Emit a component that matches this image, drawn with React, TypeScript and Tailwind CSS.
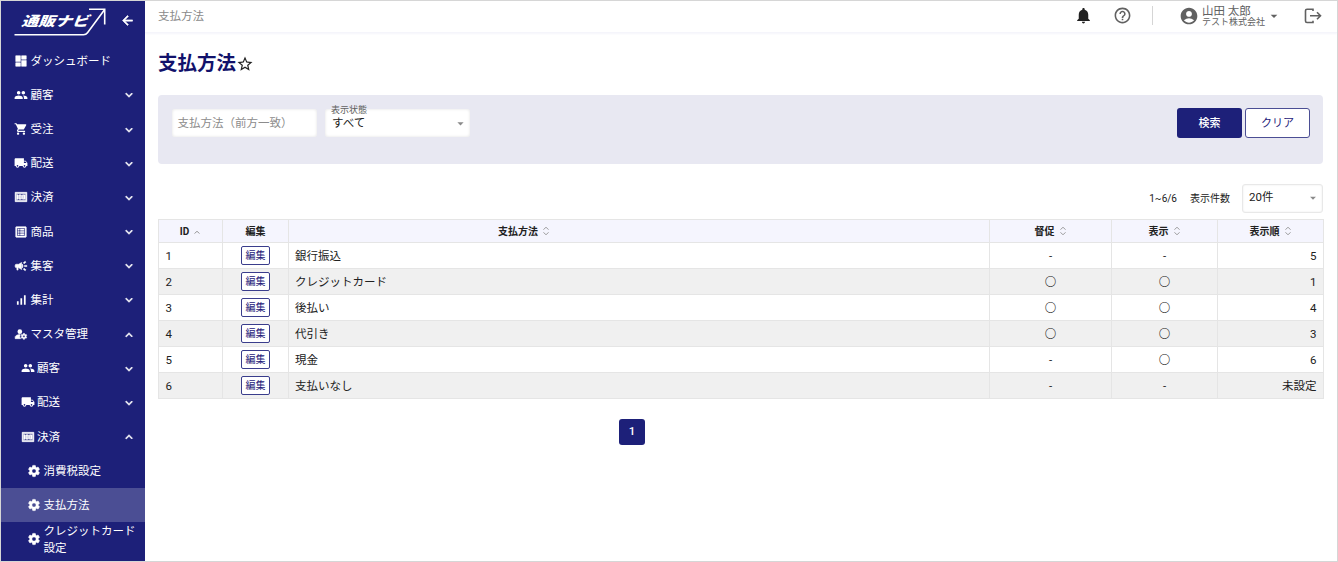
import type { ReactNode } from "react"
import type { IconType } from "react-icons"
import clsx from "clsx"
import {
  MdAccountCircle,
  MdArrowBack,
  MdArrowDropDown,
  MdCampaign,
  MdDashboard,
  MdExpandLess,
  MdExpandMore,
  MdHelpOutline,
  MdListAlt,
  MdLocalShipping,
  MdManageAccounts,
  MdMoney,
  MdNotifications,
  MdPeople,
  MdSettings,
  MdShoppingCart,
  MdSignalCellularAlt,
  MdStarBorder,
} from "react-icons/md"

type NavItem = {
  label: string
  icon: IconType
  level?: 0 | 1 | 2
  state?: "open" | "closed"
  active?: boolean
  bold?: boolean
}

const navItems: NavItem[] = [
  { label: "ダッシュボード", icon: MdDashboard, bold: true },
  { label: "顧客", icon: MdPeople, state: "closed" },
  { label: "受注", icon: MdShoppingCart, state: "closed" },
  { label: "配送", icon: MdLocalShipping, state: "closed" },
  { label: "決済", icon: MdMoney, state: "closed", bold: true },
  { label: "商品", icon: MdListAlt, state: "closed", bold: true },
  { label: "集客", icon: MdCampaign, state: "closed", bold: true },
  { label: "集計", icon: MdSignalCellularAlt, state: "closed" },
  { label: "マスタ管理", icon: MdManageAccounts, state: "open", bold: true },
  { label: "顧客", icon: MdPeople, level: 1, state: "closed" },
  { label: "配送", icon: MdLocalShipping, level: 1, state: "closed" },
  { label: "決済", icon: MdMoney, level: 1, state: "open", bold: true },
  { label: "消費税設定", icon: MdSettings, level: 2, bold: true },
  { label: "支払方法", icon: MdSettings, level: 2, active: true, bold: true },
  { label: "クレジットカード\n設定", icon: MdSettings, level: 2, bold: true },
]

const rows = [
  { id: 1, name: "銀行振込", remind: false, visible: false, order: "5" },
  { id: 2, name: "クレジットカード", remind: true, visible: true, order: "1" },
  { id: 3, name: "後払い", remind: true, visible: true, order: "4" },
  { id: 4, name: "代引き", remind: true, visible: true, order: "3" },
  { id: 5, name: "現金", remind: false, visible: true, order: "6" },
  { id: 6, name: "支払いなし", remind: false, visible: false, order: "未設定" },
]

// the Md icons carry an invisible bounding path, so only the visible one is thickened
const thick = "[&>path:not([fill=none])]:stroke-1"

function Logo() {
  return (
    <div className="relative h-[30px] w-[94px]">
      <svg className="absolute inset-0" width="94" height="30" fill="none" stroke="#fff" strokeWidth="1.6">
        <path d="M0.500 27.700H69.500Q72 27.700 73.500 25.700L90.500 2.700" />
        <path d="M75 2.200H90.700V17.500" />
      </svg>
      <span className="absolute left-[9px] top-[6px] origin-left -skew-x-[18deg] scale-x-[1.25] whitespace-nowrap text-[13.5px] font-black leading-[16px]">
        通販ナビ
      </span>
    </div>
  )
}

function NavRow({ item }: { item: NavItem }) {
  const Icon = item.icon
  return (
    <li
      className={clsx(
        "flex h-[34.18px] items-center pr-[9px]",
        item.level === 2 ? "pl-[26px]" : item.level === 1 ? "pl-[19.5px]" : "pl-[13px]",
        item.active && "bg-[#4b4e94]"
      )}
    >
      <Icon className={clsx("mr-[2.5px] size-[14px] shrink-0", item.bold && thick)} />
      <span className={clsx("whitespace-pre pt-px text-[11.5px] leading-[17px]", item.level !== 2 && "flex-1")}>
        {item.label}
      </span>
      {item.state === "closed" && <MdExpandMore className={clsx("mt-px size-[14px]", thick)} />}
      {item.state === "open" && <MdExpandLess className={clsx("mt-px size-[14px]", thick)} />}
    </li>
  )
}

function Sidebar() {
  return (
    <nav className="z-10 w-[144px] shrink-0 overflow-hidden bg-[#1d2079] text-white">
      <div className="flex h-[42.6px] items-start justify-between pl-[13px] pr-[10px] pt-[6px]">
        <Logo />
        <MdArrowBack className={clsx("mt-[6px] size-[15px]", thick)} />
      </div>
      <ul>
        {navItems.map((item, i) => (
          <NavRow key={i} item={item} />
        ))}
      </ul>
    </nav>
  )
}

function LogoutIcon() {
  return (
    <svg width="18" height="18" viewBox="0 0 18 18" fill="none" stroke="#616161" strokeWidth="1.6">
      <path d="M9 4V2.200H3Q1.500 2.200 1.500 3.700V14Q1.500 15.500 3 15.500H9V13.700" />
      <path d="M6 8.800H16.500M13 5.300L16.500 8.800L13 12.300" />
    </svg>
  )
}

function Header() {
  return (
    <header className="flex h-8 shrink-0 items-center border-b border-[#f5f5fb] pl-[13px] pr-[15px] text-[#616161] shadow-[0_1px_2px_#f5f5fb]">
      <span className="flex-1 text-[11.5px] text-[#8a8a8a]">支払方法</span>
      <MdNotifications className="mb-0.5 size-[19px] text-[#212121]" />
      <MdHelpOutline className="mb-0.5 ml-[20px] size-[19px]" />
      <span className="mb-0.5 ml-[20px] h-[19px] w-px bg-[#d5d5d5]" />
      <MdAccountCircle className="mb-0.5 ml-[26px] size-[20px]" />
      <div className="ml-[3px] flex w-[64px] flex-col whitespace-nowrap">
        <span className="text-[11.5px] leading-[12px]">山田 太郎</span>
        <span className="text-[9px] leading-[11px]">テスト株式会社</span>
      </div>
      <MdArrowDropDown className="mb-px mr-[22px] size-[16px]" />
      <div className="mb-0.5">
        <LogoutIcon />
      </div>
    </header>
  )
}

function SearchPanel() {
  return (
    <section className="mt-[18px] flex h-[69px] items-start rounded bg-[#e8e8f2] pl-[14px] pr-[13px] pt-[13px]">
      <div className="mt-px flex h-[28px] w-[145px] items-center rounded-[3px] bg-white px-[5.5px] pt-0.5 text-[11.5px] text-[#8c8c8c] shadow-[inset_0_0_3px_#e0e0e0]">
        支払方法（前方一致）
      </div>
      <div className="relative ml-2 mt-px flex h-[28px] w-[145px] items-center justify-between rounded-[3px] bg-white pl-[7px] pr-[2px] text-[11.5px] text-[#212121] shadow-[inset_0_0_3px_#e0e0e0]">
        <span className="absolute -top-[5px] left-[6px] text-[9px] leading-[12px] text-[#616161]">表示状態</span>
        <span className="pt-px">すべて</span>
        <MdArrowDropDown className="size-[15px] text-[#8a8a8a]" />
      </div>
      <button className="ml-auto h-[30px] w-[65px] rounded-[3px] bg-[#1d2079] pt-0.5 text-[11px] font-medium text-white">
        検索
      </button>
      <button className="ml-[3px] h-[30px] w-[65px] rounded-[3px] border border-[#4b4e94] bg-white pt-0.5 text-[11px] text-[#1d2079]">
        クリア
      </button>
    </section>
  )
}

function SortIcon({ asc }: { asc?: boolean }) {
  return (
    <svg width="8" height="10" viewBox="0 0 8 10" fill="none" stroke="#8e8e8e" strokeWidth="0.9">
      {asc ? (
        <path d="M1.500 7.500L4 5.300L6.500 7.500" />
      ) : (
        <>
          <path d="M1.500 3.700L4 1.200L6.500 3.700" />
          <path d="M1.500 6.300L4 8.800L6.500 6.300" />
        </>
      )}
    </svg>
  )
}

function HeadCell({ children, sort }: { children: ReactNode; sort?: "none" | "asc" }) {
  return (
    <th className="border-b border-r border-[#e5e5e5] p-0 font-bold">
      <div className="flex h-[22px] items-center justify-center gap-[4px]">
        {children}
        {sort && <SortIcon asc={sort === "asc"} />}
      </div>
    </th>
  )
}

function Cell({ children, className }: { children: ReactNode; className?: string }) {
  return (
    <td className={clsx("h-[26px] border-b border-r border-[#e5e5e5] py-0 leading-[18px]", className)}>{children}</td>
  )
}

function Flag({ on }: { on: boolean }) {
  return on ? <span className="font-light">〇</span> : <>-</>
}

function PaymentTable() {
  return (
    <table className="w-[1166px] table-fixed border-separate border-spacing-0 border-l border-t border-[#e5e5e5] text-[11.5px] text-[#212121]">
      <colgroup>
        <col className="w-[64px]" />
        <col className="w-[66px]" />
        <col className="w-[701px]" />
        <col className="w-[122px]" />
        <col className="w-[106px]" />
        <col className="w-[106px]" />
      </colgroup>
      <thead className="bg-[#f5f5fe] text-[10px]">
        <tr>
          <HeadCell sort="asc">ID</HeadCell>
          <HeadCell>編集</HeadCell>
          <th className="border-b border-r border-[#e5e5e5] p-0 font-bold">
            <div className="flex h-[22px] items-center gap-[4px] pl-[209px]">
              支払方法
              <SortIcon />
            </div>
          </th>
          <HeadCell sort="none">督促</HeadCell>
          <HeadCell sort="none">表示</HeadCell>
          <HeadCell sort="none">表示順</HeadCell>
        </tr>
      </thead>
      <tbody>
        {rows.map((row) => (
          <tr key={row.id} className="even:bg-[#f0f0f0]">
            <Cell className="px-[6.5px]">{row.id}</Cell>
            <Cell className="px-0">
              <button className="mx-auto block h-[19px] w-[29px] rounded-[2px] border border-[#3a3d8c] bg-white text-[10px] leading-[16px] text-[#1d2079]">
                編集
              </button>
            </Cell>
            <Cell className="px-[6px]">{row.name}</Cell>
            <Cell className="px-0 text-center">
              <Flag on={row.remind} />
            </Cell>
            <Cell className="px-0 text-center">
              <Flag on={row.visible} />
            </Cell>
            <Cell className="px-[6.5px] text-right">{row.order}</Cell>
          </tr>
        ))}
      </tbody>
    </table>
  )
}

export default function App() {
  return (
    <div className="flex h-[562px] w-[1338px] overflow-hidden border border-[#d6d6d6] bg-white font-['Roboto','Noto_Sans_CJK_JP',sans-serif]">
      <Sidebar />
      <div className="flex min-w-0 flex-1 flex-col">
        <Header />
        <main className="pl-[13px] pr-[14px] pt-[18px]">
          <h1 className="flex h-[26px] items-center text-[19.5px] font-bold text-[#12126b]">
            支払方法
            <MdStarBorder className="size-[18px] text-[#212121]" />
          </h1>
          <SearchPanel />
          <div className="mt-[19px] flex h-[30px] items-center justify-end text-[10px] text-[#212121]">
            <span>1~6/6</span>
            <span className="ml-[13px]">表示件数</span>
            <div className="ml-[12px] flex h-[29px] w-[81px] items-center justify-between rounded-[3px] border border-[#e8e8e8] pl-[6px] pr-[2px] text-[11.5px] shadow-[inset_0_0_2px_#e8e8e8]">
              <span>20件</span>
              <MdArrowDropDown className="size-[14px] text-[#8a8a8a]" />
            </div>
          </div>
          <div className="mt-[6px]">
            <PaymentTable />
          </div>
          <button className="ml-[461px] mt-[20px] block size-[26px] rounded-[3px] bg-[#1d2079] text-[11.5px] font-medium text-white">
            1
          </button>
        </main>
      </div>
    </div>
  )
}
